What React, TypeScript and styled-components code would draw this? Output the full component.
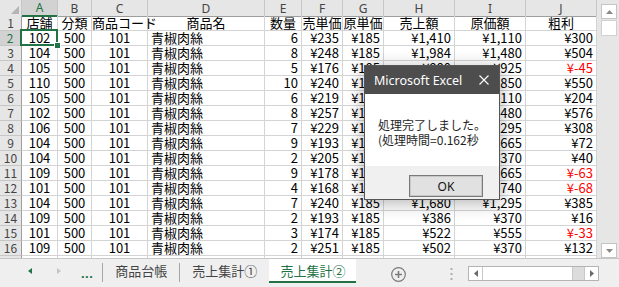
import React from 'react'
import styled, { createGlobalStyle } from 'styled-components'

const GREEN = '#217346'
const GRID = '#d4d4d4'
const COLS = '22px 36px 34px 56px 117px 37px 41px 41px 71px 71px 71px'

const GlobalStyle = createGlobalStyle`
  html, body {
    margin: 0;
    padding: 0;
    background: #fff;
  }
  body {
    font-family: 'Noto Sans CJK JP', sans-serif;
  }
`

const Window = styled.div`
  position: relative;
  width: 619px;
  height: 287px;
  overflow: hidden;
  background: #fff;
  display: flex;
  flex-direction: column;
`

const Main = styled.div`
  display: grid;
  grid-template-columns: 597px 22px;
  height: 258px;
`

const Sheet = styled.div`
  overflow: hidden;
`

const Row = styled.div<{ $head?: boolean }>`
  display: grid;
  grid-template-columns: ${COLS};
  height: ${(p) => (p.$head ? 16 : 15)}px;
`

const ColHead = styled.div<{ $sel?: boolean }>`
  box-sizing: border-box;
  display: flex;
  align-items: center;
  justify-content: center;
  background: ${(p) => (p.$sel ? '#d2d2d2' : '#e6e6e6')};
  border-right: 1px solid #c6c6c6;
  border-bottom: ${(p) => (p.$sel ? `2px solid ${GREEN}` : '1px solid #9e9e9e')};
  color: ${(p) => (p.$sel ? GREEN : '#444')};
  font: 12px/15px 'Noto Sans', 'Liberation Sans', sans-serif;
`

const Corner = styled(ColHead)`
  justify-content: flex-end;
  align-items: flex-end;
  padding: 0 2px 2px 0;
`

const RowHead = styled.div<{ $sel?: boolean }>`
  box-sizing: border-box;
  background: ${(p) => (p.$sel ? '#d2d2d2' : '#e6e6e6')};
  border-right: ${(p) => (p.$sel ? `2px solid ${GREEN}` : '1px solid #9e9e9e')};
  border-bottom: 1px solid #c6c6c6;
  color: ${(p) => (p.$sel ? GREEN : '#444')};
  font-size: 12px;
  line-height: 14px;
  text-align: center;
`

const Cell = styled.div<{ $align?: 'left' | 'center' | 'right'; $neg?: boolean; $sel?: boolean }>`
  position: relative;
  box-sizing: border-box;
  border-right: 1px solid ${GRID};
  border-bottom: 1px solid ${GRID};
  padding: 0 ${(p) => (p.$align === 'center' ? 0 : 3)}px;
  font-size: 13px;
  line-height: 14px;
  white-space: nowrap;
  text-align: ${(p) => p.$align || 'right'};
  color: ${(p) => (p.$neg ? '#ff0000' : '#000')};

  ${(p) => p.$sel && `
    &::after {
      content: '';
      position: absolute;
      inset: -2px -1px -1px -2px;
      border: 2px solid ${GREEN};
      z-index: 1;
    }
    &::before {
      content: '';
      position: absolute;
      right: -4px;
      bottom: -4px;
      width: 5px;
      height: 5px;
      background: ${GREEN};
      border: 1px solid #fff;
      z-index: 2;
    }
  `}
`

const VScroll = styled.div`
  background: #e6e6e6;
  display: flex;
  flex-direction: column;
  align-items: flex-start;
  padding: 4px 0 0 4px;
  box-sizing: border-box;
`

const ScrollBtn = styled.div`
  box-sizing: border-box;
  width: 16px;
  height: 15px;
  background: #fff;
  border: 1px solid #c4c4c4;
  display: flex;
  align-items: center;
  justify-content: center;
`

const VThumb = styled.div`
  box-sizing: border-box;
  width: 16px;
  height: 16px;
  margin-top: 1px;
  background: #fff;
  border: 1px solid #d0d0d0;
  flex: none;
`

const Spacer = styled.div`
  flex: 1;
`

const TabBar = styled.div`
  box-sizing: border-box;
  height: 29px;
  background: #efefef;
  border-top: 1px solid #c6c6c6;
  display: flex;
  align-items: flex-start;
`

const Nav = styled.div`
  height: 24px;
  display: flex;
  align-items: center;
  padding-left: 28px;
`

const Tri = styled.span<{ $dir: 'left' | 'right'; $color: string; $ml?: number }>`
  width: 0;
  height: 0;
  margin-left: ${(p) => p.$ml || 0}px;
  border-top: 3.5px solid transparent;
  border-bottom: 3.5px solid transparent;
  ${(p) => (p.$dir === 'left'
    ? `border-right: 4px solid ${p.$color};`
    : `border-left: 4px solid ${p.$color};`)}
`

const Ellipsis = styled.span`
  margin-left: 20px;
  margin-top: 6px;
  color: ${GREEN};
  font: bold 13px/10px 'Liberation Sans', sans-serif;
  letter-spacing: 0.5px;
`

const Sep = styled.span<{ $ml?: number }>`
  width: 1px;
  height: 19px;
  margin: 4px 0 0 ${(p) => p.$ml || 0}px;
  background: #a6a6a6;
`

const Tab = styled.div<{ $active?: boolean }>`
  box-sizing: border-box;
  height: 24px;
  padding: 0 ${(p) => (p.$active ? 11 : 12)}px;
  font-size: 13px;
  line-height: 23px;
  color: ${(p) => (p.$active ? GREEN : '#444')};
  background: ${(p) => (p.$active ? '#fff' : 'transparent')};
  border-bottom: ${(p) => (p.$active ? `2px solid ${GREEN}` : 'none')};
`

const AddBtn = styled.svg`
  margin: 8px 0 0 35px;
  flex: none;
`

const VDots = styled.svg`
  margin: 9px 0 0 44px;
  flex: none;
`

const HScroll = styled.div`
  box-sizing: border-box;
  display: flex;
  width: 131px;
  height: 15px;
  margin: 7px 0 0 15px;
  background: #dcdcdc;
  border: 1px solid #b4b4b4;
`

const HBtn = styled.div`
  width: 13px;
  background: #fff;
  display: flex;
  align-items: center;
  justify-content: center;
`

const HThumb = styled.div`
  width: 89px;
  background: #fff;
  border-left: 1px solid #c8c8c8;
  border-right: 1px solid #c8c8c8;
`

const HTrack = styled.div`
  flex: 1;
  border-right: 1px solid #c8c8c8;
`

const Dialog = styled.div`
  position: absolute;
  left: 364px;
  top: 65px;
  width: 136px;
  height: 135px;
  box-sizing: border-box;
  border: 1px solid #555;
  background: #fff;
  box-shadow: 0 3px 16px rgba(0, 0, 0, 0.3);
  display: flex;
  flex-direction: column;
`

const TitleBar = styled.div`
  height: 28px;
  background: #4d4d4d;
  color: #fff;
  display: flex;
  align-items: center;
  justify-content: space-between;
  padding: 0 10px 0 9px;
  font: 12.5px 'Noto Sans', 'Liberation Sans', sans-serif;
`

const Body = styled.div`
  flex: 1;
  padding: 23px 0 0 13px;
  font-size: 12px;
  line-height: 15px;
  color: #1f1f1f;
  white-space: nowrap;
`

const Footer = styled.div`
  height: 33px;
  background: #f0f0f0;
  display: flex;
  justify-content: flex-end;
  align-items: flex-start;
  padding: 9px 16px 0 0;
  box-sizing: border-box;
`

const OkButton = styled.button`
  width: 74px;
  height: 22px;
  padding: 0;
  background: #e1e1e1;
  border: 1px solid #7a7a7a;
  box-shadow: inset 0 0 0 1px #c8c8c8;
  font: 12px 'Noto Sans', 'Liberation Sans', sans-serif;
  color: #111;
`

const yen = (n: number) => `¥${n < 0 ? '-' : ''}${Math.abs(n).toLocaleString('en-US')}`

const data: [number, number, number][] = [
  [102, 6, 235], [104, 8, 248], [105, 5, 176], [110, 10, 240], [105, 6, 219],
  [102, 8, 257], [106, 7, 229], [104, 9, 193], [104, 2, 205], [109, 9, 178],
  [101, 4, 168], [104, 7, 240], [109, 2, 193], [101, 3, 174], [109, 2, 251],
]

const letters = ['A', 'B', 'C', 'D', 'E', 'F', 'G', 'H', 'I', 'J']
const titles = ['店舗', '分類', '商品コード', '商品名', '数量', '売単価', '原単価', '売上額', '原価額', '粗利']

const App = () => (
  <Window>
    <GlobalStyle />
    <Main>
      <Sheet>
        <Row $head>
          <Corner>
            <svg width="8" height="8" viewBox="0 0 8 8">
              <polygon points="8,0 8,8 0,8" fill="#b4b4b4" />
            </svg>
          </Corner>
          {letters.map((l) => (
            <ColHead key={l} $sel={l === 'A'}>{l}</ColHead>
          ))}
        </Row>
        <Row>
          <RowHead>1</RowHead>
          {titles.map((t) => (
            <Cell key={t} $align="center">{t}</Cell>
          ))}
        </Row>
        {data.map(([store, qty, price], i) => {
          const sales = qty * price
          const cost = qty * 185
          const profit = sales - cost
          return (
            <Row key={i}>
              <RowHead $sel={i === 0}>{i + 2}</RowHead>
              <Cell $align="center" $sel={i === 0}>{store}</Cell>
              <Cell $align="center">500</Cell>
              <Cell $align="center">101</Cell>
              <Cell $align="left">青椒肉絲</Cell>
              <Cell>{qty}</Cell>
              <Cell>{yen(price)}</Cell>
              <Cell>{yen(185)}</Cell>
              <Cell>{yen(sales)}</Cell>
              <Cell>{yen(cost)}</Cell>
              <Cell $neg={profit < 0}>{yen(profit)}</Cell>
            </Row>
          )
        })}
        <Row>
          <RowHead />
          {letters.map((l) => <Cell key={l} />)}
        </Row>
      </Sheet>
      <VScroll>
        <ScrollBtn>
          <svg width="7" height="4" viewBox="0 0 7 4"><polygon points="3.5,0 7,4 0,4" fill="#8a8a8a" /></svg>
        </ScrollBtn>
        <VThumb />
        <Spacer />
        <ScrollBtn>
          <svg width="7" height="4" viewBox="0 0 7 4"><polygon points="0,0 7,0 3.5,4" fill="#8a8a8a" /></svg>
        </ScrollBtn>
      </VScroll>
    </Main>
    <TabBar>
      <Nav>
        <Tri $dir="left" $color={GREEN} />
        <Tri $dir="right" $color="#c4c4c4" $ml={25} />
        <Ellipsis>...</Ellipsis>
      </Nav>
      <Sep $ml={9} />
      <Tab>商品台帳</Tab>
      <Sep />
      <Tab>売上集計①</Tab>
      <Tab $active>売上集計②</Tab>
      <AddBtn width="15" height="15" viewBox="0 0 15 15">
        <circle cx="7.5" cy="7.5" r="6.8" fill="none" stroke="#7a7a7a" strokeWidth="1.2" />
        <path d="M7.5 4v7M4 7.5h7" stroke="#7a7a7a" strokeWidth="1.6" />
      </AddBtn>
      <VDots width="3" height="12" viewBox="0 0 3 12">
        <rect x="0.5" y="0" width="2" height="2" fill="#b0b0b0" />
        <rect x="0.5" y="5" width="2" height="2" fill="#b0b0b0" />
        <rect x="0.5" y="10" width="2" height="2" fill="#b0b0b0" />
      </VDots>
      <HScroll>
        <HBtn>
          <svg width="4" height="7" viewBox="0 0 4 7"><polygon points="4,0 4,7 0,3.5" fill="#6a6a6a" /></svg>
        </HBtn>
        <HThumb />
        <HTrack />
        <HBtn>
          <svg width="4" height="7" viewBox="0 0 4 7"><polygon points="0,0 4,3.5 0,7" fill="#6a6a6a" /></svg>
        </HBtn>
      </HScroll>
    </TabBar>
    <Dialog>
      <TitleBar>
        <span>Microsoft Excel</span>
        <svg width="10" height="10" viewBox="0 0 10 10">
          <path d="M0.5 0.5l9 9M9.5 0.5l-9 9" stroke="#fff" strokeWidth="1.1" />
        </svg>
      </TitleBar>
      <Body>
        処理完了しました。
        <br />
        (処理時間=0.162秒
      </Body>
      <Footer>
        <OkButton type="button">OK</OkButton>
      </Footer>
    </Dialog>
  </Window>
)

export default App
